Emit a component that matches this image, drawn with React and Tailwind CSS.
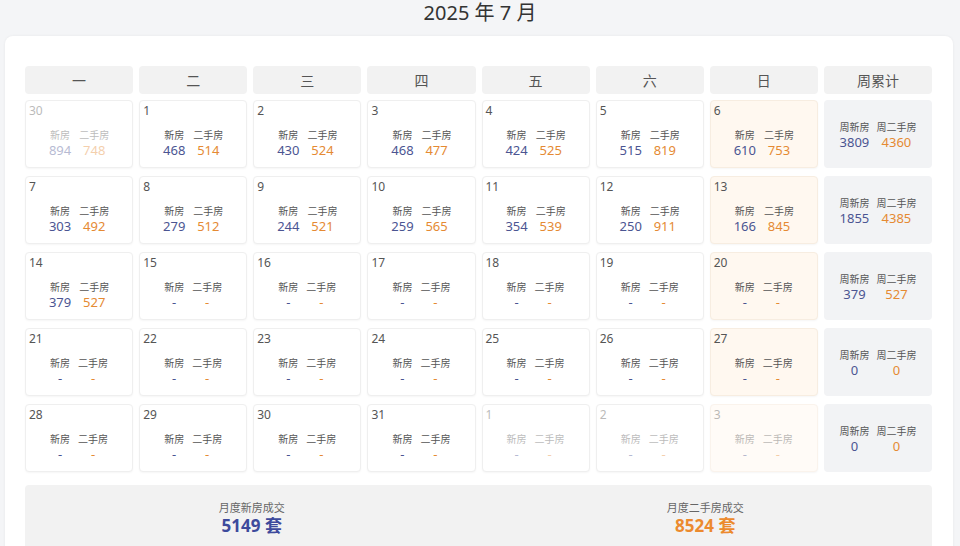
import React from "react";

const rows = [
  { days: [
    { d: 30, n: "894", s: "748", faded: true },
    { d: 1, n: "468", s: "514" },
    { d: 2, n: "430", s: "524" },
    { d: 3, n: "468", s: "477" },
    { d: 4, n: "424", s: "525" },
    { d: 5, n: "515", s: "819" },
    { d: 6, n: "610", s: "753" },
  ], wn: "3809", ws: "4360" },
  { days: [
    { d: 7, n: "303", s: "492" },
    { d: 8, n: "279", s: "512" },
    { d: 9, n: "244", s: "521" },
    { d: 10, n: "259", s: "565" },
    { d: 11, n: "354", s: "539" },
    { d: 12, n: "250", s: "911" },
    { d: 13, n: "166", s: "845" },
  ], wn: "1855", ws: "4385" },
  { days: [
    { d: 14, n: "379", s: "527" },
    { d: 15, n: "-", s: "-" },
    { d: 16, n: "-", s: "-" },
    { d: 17, n: "-", s: "-" },
    { d: 18, n: "-", s: "-" },
    { d: 19, n: "-", s: "-" },
    { d: 20, n: "-", s: "-" },
  ], wn: "379", ws: "527" },
  { days: [
    { d: 21, n: "-", s: "-" },
    { d: 22, n: "-", s: "-" },
    { d: 23, n: "-", s: "-" },
    { d: 24, n: "-", s: "-" },
    { d: 25, n: "-", s: "-" },
    { d: 26, n: "-", s: "-" },
    { d: 27, n: "-", s: "-" },
  ], wn: "0", ws: "0" },
  { days: [
    { d: 28, n: "-", s: "-" },
    { d: 29, n: "-", s: "-" },
    { d: 30, n: "-", s: "-" },
    { d: 31, n: "-", s: "-" },
    { d: 1, n: "-", s: "-", faded: true },
    { d: 2, n: "-", s: "-", faded: true },
    { d: 3, n: "-", s: "-", faded: true },
  ], wn: "0", ws: "0" },
];

const heads = ["一", "二", "三", "四", "五", "六", "日", "周累计"];

function DayCell({ day, sunday }) {
  const base = sunday
    ? day.faded
      ? "bg-[#fffbf7] border-[#faf3ec]"
      : "bg-[#fff8f0] border-[#f7ede1]"
    : "bg-white border-[#efefef]";
  return (
    <div className={`h-[68px] rounded-[4px] border ${base} shadow-[0_1px_2px_rgba(0,0,0,0.04)] flex flex-col px-[3px] pt-[2px]`}>
      <div className={day.faded ? "opacity-40" : ""}>
        <div className="text-[12px] leading-[16px] text-[#555]">{day.d}</div>
        <div className="mt-[9px] flex justify-center gap-[8px]">
          <div className="flex flex-col items-center">
            <span className="text-[10px] leading-[14px] text-[#555]">新房</span>
            <span className="text-[13px] leading-[16px] text-[#4b5592]">{day.n}</span>
          </div>
          <div className="flex flex-col items-center">
            <span className="text-[10px] leading-[14px] text-[#555]">二手房</span>
            <span className="text-[13px] leading-[16px] text-[#e58a33]">{day.s}</span>
          </div>
        </div>
      </div>
    </div>
  );
}

function WeekCell({ wn, ws }) {
  return (
    <div className="h-[68px] rounded-[4px] bg-[#f2f3f5] flex items-center justify-center gap-[7px] pt-[2px]">
      <div className="flex flex-col items-center">
        <span className="text-[10px] leading-[14px] text-[#555]">周新房</span>
        <span className="text-[13px] leading-[16px] text-[#4b5592]">{wn}</span>
      </div>
      <div className="flex flex-col items-center">
        <span className="text-[10px] leading-[14px] text-[#555]">周二手房</span>
        <span className="text-[13px] leading-[16px] text-[#e58a33]">{ws}</span>
      </div>
    </div>
  );
}

export default function App() {
  return (
    <div
      className="w-[960px] h-[546px] overflow-hidden bg-[#f4f5f7]"
      style={{ fontFamily: '"Noto Sans", "Noto Sans CJK SC", sans-serif' }}
    >
      <div className="h-[26px] flex items-center justify-center text-[20px] leading-[26px] text-[#333]">
        2025 年 7 月
      </div>
      <div className="mt-[10px] ml-[5px] w-[948px] h-[600px] bg-white rounded-[8px] shadow-[0_0_3px_rgba(0,0,0,0.06)] pt-[30px] pl-[20px] pr-[21px]">
        <div className="grid grid-cols-8 gap-x-[6px]">
          {heads.map((h) => (
            <div key={h} className="h-[28px] rounded-[4px] bg-[#f2f2f2] flex items-center justify-center text-[14px] text-[#555]">
              {h}
            </div>
          ))}
        </div>
        <div className="mt-[6px] grid grid-cols-8 gap-x-[6px] gap-y-[8px]">
          {rows.map((r, ri) => (
            <React.Fragment key={ri}>
              {r.days.map((day, di) => (
                <DayCell key={di} day={day} sunday={di === 6} />
              ))}
              <WeekCell wn={r.wn} ws={r.ws} />
            </React.Fragment>
          ))}
        </div>
        <div className="mt-[13px] h-[80px] rounded-[4px] bg-[#f2f2f2] flex pt-[15px]">
          <div className="flex-1 flex flex-col items-center">
            <span className="text-[11px] leading-[16px] text-[#666]">月度新房成交</span>
            <span className="text-[17px] leading-[20px] font-bold text-[#3d4a9c]">5149 套</span>
          </div>
          <div className="flex-1 flex flex-col items-center">
            <span className="text-[11px] leading-[16px] text-[#666]">月度二手房成交</span>
            <span className="text-[17px] leading-[20px] font-bold text-[#ec8a2e]">8524 套</span>
          </div>
        </div>
      </div>
    </div>
  );
}
